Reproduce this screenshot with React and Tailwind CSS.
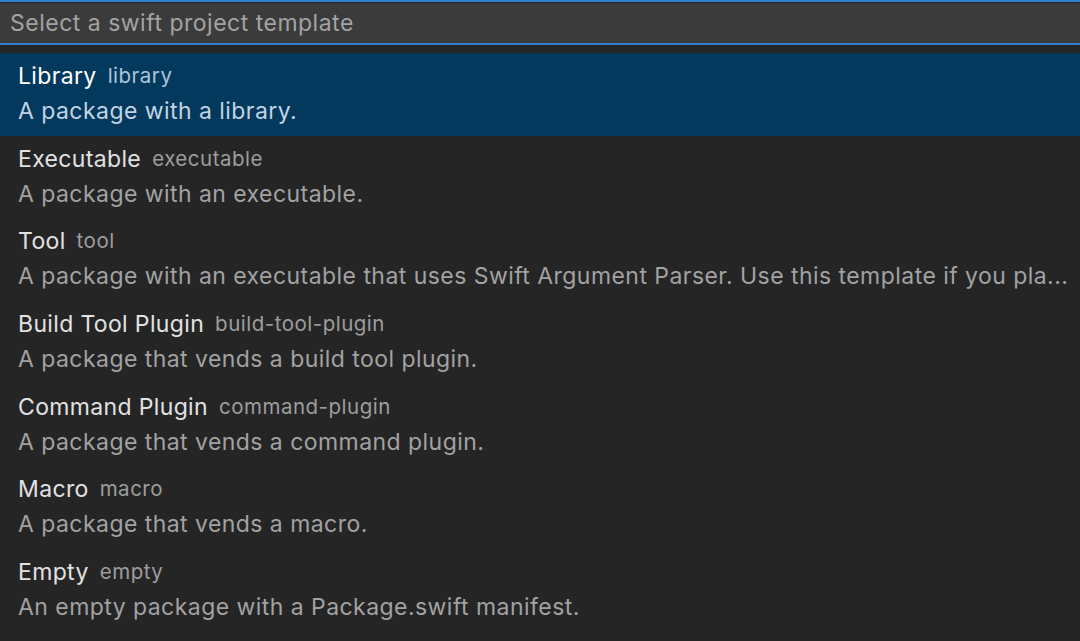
const items = [
  { label: "Library", id: "library", desc: "A package with a library." },
  { label: "Executable", id: "executable", desc: "A package with an executable." },
  {
    label: "Tool",
    id: "tool",
    desc: "A package with an executable that uses Swift Argument Parser. Use this template if you pla...",
  },
  { label: "Build Tool Plugin", id: "build-tool-plugin", desc: "A package that vends a build tool plugin." },
  { label: "Command Plugin", id: "command-plugin", desc: "A package that vends a command plugin." },
  { label: "Macro", id: "macro", desc: "A package that vends a macro." },
  { label: "Empty", id: "empty", desc: "An empty package with a Package.swift manifest." },
];

export default function App() {
  return (
    <div
      className="w-[1080px] h-[641px] overflow-hidden bg-[#252526] flex flex-col"
      style={{ fontFamily: "Inter, 'Noto Sans', sans-serif" }}
    >
      <div className="h-[2px] bg-[#2f7fd3]" />
      <div className="h-[42px] mt-[1px] bg-[#3b3b3c] border-b-2 border-[#2f7fd3] flex items-center px-[10px] pt-[1px]">
        <span className="text-[23px] text-[#a3a3a3] tracking-[0.5px]">Select a swift project template</span>
      </div>
      <div className="h-[8px]" />
      <div className="flex flex-col">
        {items.map((it, i) => {
          const sel = i === 0;
          return (
            <div
              key={it.id}
              className={
                "h-[82.6px] shrink-0 px-[18px] pt-[6px] " + (sel ? "bg-[#04395e]" : "")
              }
            >
              <div className="h-[35px] flex items-center gap-[11px] whitespace-nowrap">
                <span className={"text-[23px] tracking-[0.35px] " + (sel ? "text-white" : "text-[#e2e2e2]")}>
                  {it.label}
                </span>
                <span className={"text-[20.5px] tracking-[0.5px] " + (sel ? "text-[#aec5da]" : "text-[#9d9d9d]")}>
                  {it.id}
                </span>
              </div>
              <div
                className={
                  "h-[35px] flex items-center text-[23px] tracking-[0.45px] whitespace-nowrap " +
                  (sel ? "text-[#c2d4e3]" : "text-[#a2a2a2]")
                }
              >
                {it.desc}
              </div>
            </div>
          );
        })}
      </div>
    </div>
  );
}
